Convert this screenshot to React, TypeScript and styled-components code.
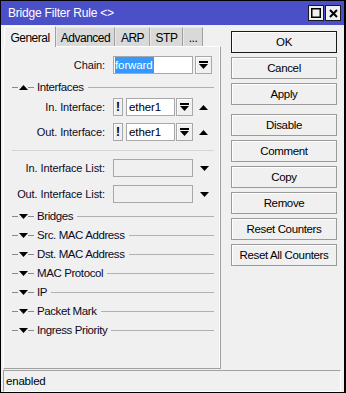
import React from "react";
import styled, { createGlobalStyle } from "styled-components";

const GlobalStyle = createGlobalStyle`
  html, body {
    margin: 0;
    padding: 0;
    background: #f0f0f0;
  }
  * {
    box-sizing: border-box;
  }
`;

const Window = styled.div`
  width: 346px;
  height: 393px;
  border: 1px solid #000;
  border-right-width: 2px;
  background: #f0f0f0;
  display: flex;
  flex-direction: column;
  font-family: "Liberation Sans", Arial, sans-serif;
  font-size: 11px;
  letter-spacing: -0.1px;
  color: #0a0a1e;
`;

const TitleBar = styled.div`
  height: 24px;
  flex: none;
  background: #4c50c8;
  display: flex;
  align-items: center;
  padding: 0 3px 0 7px;
  color: #fff;
  font-size: 12px;
  letter-spacing: -0.2px;
`;

const TitleText = styled.span`
  flex: 1;
`;

const TitleButton = styled.div`
  width: 16px;
  height: 16px;
  margin-left: 1px;
  background: #f0f0f0;
  border: 1px solid #1a1a1a;
  display: flex;
  align-items: center;
  justify-content: center;
`;

const Main = styled.div`
  flex: 1;
  display: flex;
  padding: 1px 0 1px 2px;
`;

const LeftCol = styled.div`
  width: 218px;
  display: flex;
  flex-direction: column;
`;

const Tabs = styled.div`
  height: 20px;
  display: flex;
  align-items: flex-end;
  padding-left: 1px;
`;

const Tab = styled.div<{ $active?: boolean; $w: number }>`
  width: ${(p) => p.$w}px;
  height: ${(p) => (p.$active ? 21 : 19)}px;
  margin-bottom: ${(p) => (p.$active ? -1 : 0)}px;
  background: ${(p) => (p.$active ? "#f0f0f0" : "#d9d9d9")};
  border: 1px solid ${(p) => (p.$active ? "#fff" : "#e8e8e8")};
  border-bottom: none;
  border-right-color: #a0a0a0;
  z-index: ${(p) => (p.$active ? 1 : 0)};
  display: flex;
  justify-content: center;
  padding-top: ${(p) => (p.$active ? 4 : 3)}px;
  font-size: 12px;
  letter-spacing: -0.5px;
  color: #000;
`;

const Panel = styled.div`
  flex: 1;
  border: 1px solid #a0a0a0;
  border-top-color: #fff;
  border-left-color: #fff;
  box-shadow: inset -1px 0 0 #fff;
  padding-top: 9px;
  display: flex;
  flex-direction: column;
`;

const Row = styled.div<{ $mt?: number }>`
  height: 18px;
  margin-top: ${(p) => p.$mt ?? 0}px;
  display: flex;
  align-items: center;
`;

const Label = styled.div`
  width: 101px;
  margin-right: 8px;
  text-align: right;
  white-space: nowrap;
`;

const Input = styled.div<{ $w: number; $disabled?: boolean }>`
  width: ${(p) => p.$w}px;
  height: 18px;
  background: ${(p) => (p.$disabled ? "#f0f0f0" : "#fff")};
  border: 1px solid #a8a8a8;
  display: flex;
  align-items: center;
  padding-left: 2px;
  color: #000;
  font-size: 11.5px;
  letter-spacing: -0.1px;
`;

const Selected = styled.span`
  height: 100%;
  margin-left: -1px;
  display: flex;
  align-items: center;
  background: #3399ff;
  color: #fff;
  padding-right: 1px;
`;

const SmallButton = styled.div<{ $w: number; $ml?: number }>`
  width: ${(p) => p.$w}px;
  height: 18px;
  margin-left: ${(p) => p.$ml ?? 0}px;
  background: #f0f0f0;
  border: 1px solid #a8a8a8;
  box-shadow: inset 1px 1px 0 #fff;
  display: flex;
  align-items: center;
  justify-content: center;
  font-weight: bold;
  font-size: 12px;
  color: #000;
`;

const Arrow = styled.div<{ $ml?: number }>`
  margin-left: ${(p) => p.$ml ?? 0}px;
  display: flex;
  align-items: center;
`;

const Separator = styled.div<{ $mt?: number }>`
  height: 1px;
  margin: ${(p) => p.$mt ?? 0}px 6px 0 8px;
  background: #d4d4d4;
`;

const SectionRow = styled.div<{ $mt?: number }>`
  height: 14px;
  margin: ${(p) => p.$mt ?? 0}px 6px 0 8px;
  display: flex;
  align-items: center;
`;

const Dash = styled.div<{ $w: number }>`
  width: ${(p) => p.$w}px;
  height: 1px;
  background: #8a8a8a;
`;

const SectionTitle = styled.span`
  margin: 0 4px 0 3px;
  font-size: 11.5px;
  letter-spacing: -0.4px;
  white-space: nowrap;
`;

const Line = styled.div`
  flex: 1;
  height: 1px;
  background: #b0b0b0;
`;

const RightCol = styled.div`
  width: 106px;
  margin-left: 10px;
  padding-top: 5px;
  display: flex;
  flex-direction: column;
`;

const Button = styled.div<{ $default?: boolean; $mt?: number }>`
  height: 22px;
  margin-top: ${(p) => p.$mt ?? 4}px;
  background: #f0f0f0;
  border: 1px solid ${(p) => (p.$default ? "#1a1a1a" : "#9a9a9a")};
  box-shadow: inset 1px 1px 0 #fff;
  display: flex;
  align-items: center;
  justify-content: center;
  font-size: 11.5px;
  letter-spacing: -0.35px;
  color: #000;
`;

const StatusBar = styled.div`
  height: 22px;
  margin: 0 3px 0 2px;
  border-top: 1px solid #a0a0a0;
  border-left: 1px solid #a0a0a0;
  border-bottom: 1px solid #fff;
  border-right: 1px solid #fff;
  display: flex;
  align-items: center;
  padding-left: 2px;
  font-size: 11.5px;
  letter-spacing: -0.2px;
  color: #000;
`;

const Tri = ({ up }: { up?: boolean }) => (
  <svg width="9" height="5" viewBox="0 0 9 5">
    <polygon points={up ? "0,5 9,5 4.5,0" : "0,0 9,0 4.5,5"} fill="#000" />
  </svg>
);

const DropIcon = () => (
  <svg width="9" height="9" viewBox="0 0 9 9">
    <rect x="0" y="0" width="9" height="2" fill="#000" />
    <polygon points="0,3 9,3 4.5,8" fill="#000" />
  </svg>
);

const Section = ({ title, open, mt }: { title: string; open?: boolean; mt?: number }) => (
  <SectionRow $mt={mt}>
    <Dash $w={6} />
    <Arrow $ml={1}>
      <Tri up={open} />
    </Arrow>
    <Dash $w={6} />
    <SectionTitle>{title}</SectionTitle>
    <Line />
  </SectionRow>
);

const InterfaceRow = ({ label, mt }: { label: string; mt?: number }) => (
  <Row $mt={mt}>
    <Label>{label}</Label>
    <SmallButton $w={10}>!</SmallButton>
    <Input $w={49} style={{ marginLeft: 3 }}>ether1</Input>
    <SmallButton $w={17} $ml={1}>
      <DropIcon />
    </SmallButton>
    <Arrow $ml={6}>
      <Tri up />
    </Arrow>
  </Row>
);

const ListRow = ({ label, mt }: { label: string; mt?: number }) => (
  <Row $mt={mt}>
    <Label>{label}</Label>
    <Input $w={80} $disabled />
    <Arrow $ml={7}>
      <Tri />
    </Arrow>
  </Row>
);

const tabs = [
  { name: "General", w: 52, active: true },
  { name: "Advanced", w: 59 },
  { name: "ARP", w: 35 },
  { name: "STP", w: 33 },
  { name: "...", w: 20 },
];

const sections = [
  "Bridges",
  "Src. MAC Address",
  "Dst. MAC Address",
  "MAC Protocol",
  "IP",
  "Packet Mark",
  "Ingress Priority",
];

const buttons = [
  { text: "OK", def: true, mt: 0 },
  { text: "Cancel" },
  { text: "Apply" },
  { text: "Disable", mt: 9 },
  { text: "Comment" },
  { text: "Copy" },
  { text: "Remove" },
  { text: "Reset Counters" },
  { text: "Reset All Counters" },
];

const App = () => {
  return (
    <>
      <GlobalStyle />
      <Window>
        <TitleBar>
          <TitleText>Bridge Filter Rule &lt;&gt;</TitleText>
          <TitleButton>
            <svg width="10" height="10" viewBox="0 0 10 10">
              <rect x="0.75" y="0.75" width="8.5" height="8.5" fill="none" stroke="#000" strokeWidth="1.5" />
            </svg>
          </TitleButton>
          <TitleButton>
            <svg width="9" height="9" viewBox="0 0 9 9">
              <path d="M1 1 L8 8 M8 1 L1 8" stroke="#000" strokeWidth="2" />
            </svg>
          </TitleButton>
        </TitleBar>

        <Main>
          <LeftCol>
            <Tabs>
              {tabs.map((t) => (
                <Tab key={t.name} $w={t.w} $active={t.active}>
                  {t.name}
                </Tab>
              ))}
            </Tabs>
            <Panel>
              <Row>
                <Label>Chain:</Label>
                <Input $w={80}>
                  <Selected>forward</Selected>
                </Input>
                <SmallButton $w={17} $ml={2}>
                  <DropIcon />
                </SmallButton>
              </Row>
              <Section title="Interfaces" open mt={6} />
              <InterfaceRow label="In. Interface:" mt={4} />
              <InterfaceRow label="Out. Interface:" mt={7} />
              <Separator $mt={9} />
              <ListRow label="In. Interface List:" mt={8} />
              <ListRow label="Out. Interface List:" mt={8} />
              {sections.map((s, i) => (
                <Section key={s} title={s} mt={i === 0 ? 6 : 5} />
              ))}
            </Panel>
          </LeftCol>

          <RightCol>
            {buttons.map((b) => (
              <Button key={b.text} $default={b.def} $mt={b.mt}>
                {b.text}
              </Button>
            ))}
          </RightCol>
        </Main>

        <StatusBar>enabled</StatusBar>
      </Window>
    </>
  );
};

export default App;
